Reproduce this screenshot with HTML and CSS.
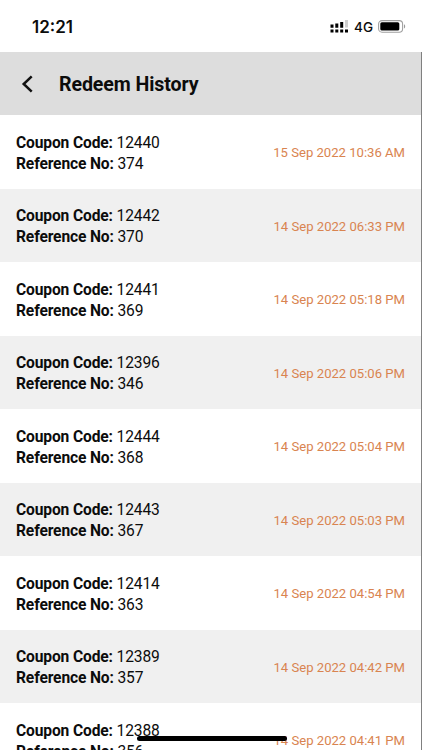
FILE: index.html
```html
<!DOCTYPE html>
<html lang="en">
<head>
  <meta charset="UTF-8">
  <meta name="viewport" content="width=device-width, initial-scale=1.0">
  <title>Redeem History</title>
  <link rel="stylesheet" href="styles.css">
</head>
<body>
  <div class="screen">
    <div class="status">
      <span class="time">12:21</span>
      <div class="status-right">
        <svg class="signal" width="19" height="13" viewBox="0 0 19 13">
          <path fill="#d0d0d0" d="M15 0h3v7.5h-3z"/>
          <path d="M.5 4.5h3v3.2h-3zM5.3 3.5h3v4.2h-3zM10.2 2h3v5.7h-3z"/>
          <path d="M.5 9.4h3v3h-3zM5.3 9.4h3v3h-3zM10.2 9.4h3v3h-3zM15 9.4h3v3h-3z"/>
        </svg>
        <span class="network">4G</span>
        <svg class="battery" width="28" height="13" viewBox="0 0 28 13">
          <rect x=".6" y=".6" width="24" height="11.6" rx="3.4" fill="#fff" stroke="#a0a0a0" stroke-width="1.1"/>
          <rect x="2.3" y="2.2" width="19" height="8.4" rx="1.6"/>
          <path fill="#999" d="M26 4.3c1.6.6 1.6 3.6 0 4.2z"/>
        </svg>
      </div>
    </div>
    <div class="app">
      <div class="header">
        <svg class="back" width="12" height="18" viewBox="0 0 12 18">
          <path d="M10.7 1.3 2.7 9l8 7.7" fill="none" stroke="#111" stroke-width="2.5"/>
        </svg>
        <h1>Redeem History</h1>
      </div>
      <div class="list">
        <div class="row">
          <div class="info">
            <p><b>Coupon Code:</b> 12440</p>
            <p><b>Reference No:</b> 374</p>
          </div>
          <span class="date">15 Sep 2022 10:36 AM</span>
        </div>
        <div class="row">
          <div class="info">
            <p><b>Coupon Code:</b> 12442</p>
            <p><b>Reference No:</b> 370</p>
          </div>
          <span class="date">14 Sep 2022 06:33 PM</span>
        </div>
        <div class="row">
          <div class="info">
            <p><b>Coupon Code:</b> 12441</p>
            <p><b>Reference No:</b> 369</p>
          </div>
          <span class="date">14 Sep 2022 05:18 PM</span>
        </div>
        <div class="row">
          <div class="info">
            <p><b>Coupon Code:</b> 12396</p>
            <p><b>Reference No:</b> 346</p>
          </div>
          <span class="date">14 Sep 2022 05:06 PM</span>
        </div>
        <div class="row">
          <div class="info">
            <p><b>Coupon Code:</b> 12444</p>
            <p><b>Reference No:</b> 368</p>
          </div>
          <span class="date">14 Sep 2022 05:04 PM</span>
        </div>
        <div class="row">
          <div class="info">
            <p><b>Coupon Code:</b> 12443</p>
            <p><b>Reference No:</b> 367</p>
          </div>
          <span class="date">14 Sep 2022 05:03 PM</span>
        </div>
        <div class="row">
          <div class="info">
            <p><b>Coupon Code:</b> 12414</p>
            <p><b>Reference No:</b> 363</p>
          </div>
          <span class="date">14 Sep 2022 04:54 PM</span>
        </div>
        <div class="row">
          <div class="info">
            <p><b>Coupon Code:</b> 12389</p>
            <p><b>Reference No:</b> 357</p>
          </div>
          <span class="date">14 Sep 2022 04:42 PM</span>
        </div>
        <div class="row">
          <div class="info">
            <p><b>Coupon Code:</b> 12388</p>
            <p><b>Reference No:</b> 356</p>
          </div>
          <span class="date">14 Sep 2022 04:41 PM</span>
        </div>
      </div>
    </div>
    <div class="home-bar"></div>
  </div>
</body>
</html>
```
FILE: styles.css
```css
* {
  margin: 0;
  padding: 0;
  box-sizing: border-box;
}
body {
  background-color: #fff;
  font-family: Roboto, sans-serif;
  color: #0c0c0c;
}
.screen {
  position: relative;
  width: 422px;
  height: 750px;
  overflow: hidden;
}
.status {
  height: 52px;
  padding: 1px 16px 0 32px;
  display: flex;
  align-items: center;
  justify-content: space-between;
  font-family: Inter, sans-serif;
}
.time {
  font-size: 17px;
  font-weight: 600;
}
.status-right {
  display: flex;
  align-items: center;
}
.network {
  font-size: 13.5px;
  font-weight: 500;
  margin: 0 5px 0 5px;
}
.app {
  border-right: 1px solid #808080;
}
.header {
  height: 63px;
  padding-left: 21px;
  display: flex;
  align-items: center;
  background-color: #ddd;
}
.header h1 {
  margin-left: 26px;
  padding-top: 2px;
  font-size: 19.6px;
  font-weight: 700;
  letter-spacing: -0.1px;
}
.row {
  height: 73.5px;
  padding: 0 16px;
  display: flex;
  align-items: center;
  justify-content: space-between;
}
.row:nth-child(even) {
  background-color: #f0f0f0;
}
.info {
  padding-top: 4px;
  font-size: 15.6px;
  line-height: 20.8px;
  letter-spacing: -0.14px;
}
.date {
  padding-top: 1.5px;
  font-size: 13.1px;
  color: #d98450;
}
/* iPhone home indicator, sits over the list */
.home-bar {
  position: absolute;
  left: 137px;
  bottom: 9px;
  width: 150px;
  height: 5px;
  border-radius: 3px;
  background-color: #000;
}
```
